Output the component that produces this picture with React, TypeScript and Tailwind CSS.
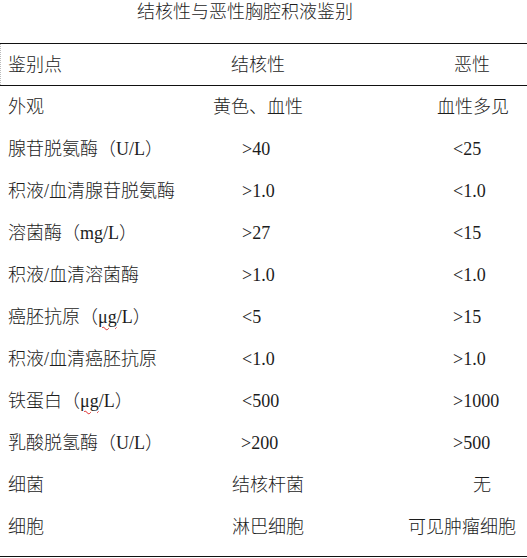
import React from "react";

interface Row {
  label: React.ReactNode;
  tb: string;
  tbCls: string;
  mal: string;
  malCls: string;
}

const Ug = () => (
  <>
    （<span className="underline decoration-wavy decoration-[#e03030] decoration-[1px] underline-offset-[3px]">μg</span>/L）
  </>
);

const rows: Row[] = [
  { label: "外观", tb: "黄色、血性", tbCls: "pl-[13px]", mal: "血性多见", malCls: "pl-[37px]" },
  { label: "腺苷脱氨酶（U/L）", tb: ">40", tbCls: "pl-[42px]", mal: "<25", malCls: "pl-[53px]" },
  { label: "积液/血清腺苷脱氨酶", tb: ">1.0", tbCls: "pl-[42px]", mal: "<1.0", malCls: "pl-[53px]" },
  { label: "溶菌酶（mg/L）", tb: ">27", tbCls: "pl-[42px]", mal: "<15", malCls: "pl-[53px]" },
  { label: "积液/血清溶菌酶", tb: ">1.0", tbCls: "pl-[42px]", mal: "<1.0", malCls: "pl-[53px]" },
  { label: <>癌胚抗原<Ug /></>, tb: "<5", tbCls: "pl-[42px]", mal: ">15", malCls: "pl-[53px]" },
  { label: "积液/血清癌胚抗原", tb: "<1.0", tbCls: "pl-[42px]", mal: ">1.0", malCls: "pl-[53px]" },
  { label: <>铁蛋白<Ug /></>, tb: "<500", tbCls: "pl-[42px]", mal: ">1000", malCls: "pl-[53px]" },
  { label: "乳酸脱氢酶（U/L）", tb: ">200", tbCls: "pl-[41px]", mal: ">500", malCls: "pl-[53px]" },
  { label: "细菌", tb: "结核杆菌", tbCls: "pl-[32px]", mal: "无", malCls: "pl-[73px]" },
  { label: "细胞", tb: "淋巴细胞", tbCls: "pl-[32px]", mal: "可见肿瘤细胞", malCls: "pl-[8px]" },
];

export default function App() {
  return (
    <div className="w-[527px] h-[558px] bg-white text-[#1c1c1c] font-['Liberation_Serif','Noto_Sans_CJK_SC',serif] font-light text-[18px] leading-[18px] overflow-hidden">
      <h1 className="pl-[137px] pt-[3px] h-[43px] font-light text-[18px] leading-[18px]">
        结核性与恶性胸腔积液鉴别
      </h1>
      <div className="border-t-[1.5px] border-b border-[#111]">
        <div className="flex items-center h-[41px] border-l border-dotted border-l-[#bbb]">
          <div className="w-[200px] pl-[7px]">鉴别点</div>
          <div className="w-[200px] pl-[30px]">结核性</div>
          <div className="flex-1 pl-[53px]">恶性</div>
        </div>
      </div>
      <div className="border-b-[1.5px] border-[#111] pb-[8px]">
        {rows.map((r, i) => (
          <div key={i} className="flex items-center h-[42px]">
            <div className="w-[200px] pl-[8px] whitespace-nowrap">{r.label}</div>
            <div className={"w-[200px] whitespace-nowrap " + r.tbCls}>{r.tb}</div>
            <div className={"flex-1 whitespace-nowrap " + r.malCls}>{r.mal}</div>
          </div>
        ))}
      </div>
    </div>
  );
}
